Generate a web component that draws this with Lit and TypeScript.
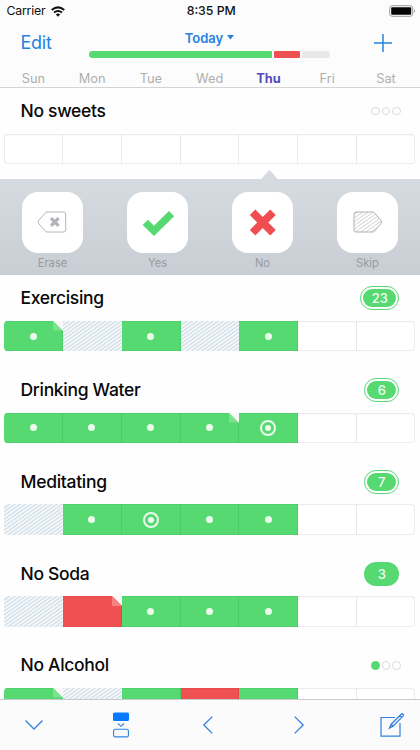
import { LitElement, html, css, svg, nothing } from "lit";
import { customElement, property } from "lit/decorators.js";
import { classMap } from "lit/directives/class-map.js";

// Marks: y done, n failed, s skipped, e empty; "*" adds a note fold, "o" adds a ring
type Habit = { name: string; marks: string[]; streak: number; ringed?: boolean };

const FIRST: Habit = { name: "No sweets", marks: ["e", "e", "e", "e", "e", "e", "e"], streak: 0 };
const HABITS: Habit[] = [
  { name: "Exercising", marks: ["y*", "s", "y", "s", "y", "e", "e"], streak: 23, ringed: true },
  { name: "Drinking Water", marks: ["y", "y", "y", "y*", "yo", "e", "e"], streak: 6, ringed: true },
  { name: "Meditating", marks: ["s", "y", "yo", "y", "y", "e", "e"], streak: 7, ringed: true },
  { name: "No Soda", marks: ["s", "n*", "y", "y", "y", "e", "e"], streak: 3 },
  { name: "No Alcohol", marks: ["y*", "s", "y", "n", "y", "e", "e"], streak: 1 },
];
const DAYS = ["Sun", "Mon", "Tue", "Wed", "Thu", "Fri", "Sat"];

@customElement("habit-row")
export class HabitRow extends LitElement {
  @property({ attribute: false }) habit!: Habit;

  static styles = css`
    :host { display: block; height: 91.7px; flex: none; }
    .head { display: flex; justify-content: space-between; align-items: center; height: 46px; padding: 1px 20.7px 0 20.5px; box-sizing: border-box; }
    .name { font-size: 17.5px; font-weight: 550; letter-spacing: -0.3px; color: #080808; line-height: 24px; white-space: nowrap; }
    .badge { box-sizing: border-box; min-width: 35px; height: 24px; border-radius: 12px; background: #55d970; color: #f2fff4; font-size: 13px; font-weight: 500; line-height: 24px; text-align: center; }
    .badge.ringed { border: 1px solid #55d970; background: none; padding: 2px; line-height: 18px; }
    .badge.ringed span { display: block; border-radius: 9px; background: #55d970; }
    .badge.wide { min-width: 39px; }
    .dots { display: flex; gap: 1.4px; margin-right: -1.2px; }
    .dot { box-sizing: border-box; flex: none; width: 8.8px; height: 8.8px; border: 1px solid #dadada; border-radius: 50%; }
    .dot.on { background: #55d970; border-color: #55d970; }
    .cells { box-sizing: border-box; margin: 0 4.6px 0 4.4px; height: 30.5px; display: grid; grid-template-columns: repeat(7, 1fr); border-radius: 4px; overflow: hidden; background: #fff; box-shadow: inset 0 0 0 1px #ececec, inset 0 1px 2px #efefef; }
    .cell { position: relative; display: grid; place-items: center; box-sizing: border-box; border-right: 1px solid #e8e8e8; }
    .cell:last-child { border-right: none; }
    .y { background: #55d970; border-right-color: #4ccb66; box-shadow: inset 0 1px #50d06b, inset 0 -1px #50d06b; }
    .n { background: #ef5051; border-right-color: #df4747; box-shadow: inset 0 1px #e84c4d, inset 0 -1px #e84c4d; }
    .s { border-right: none; }
    .hatch { width: 100%; height: 30.5px; display: block; }
    .mark { width: 7px; height: 7px; border-radius: 50%; background: #e9fbeb; }
    .ring { width: 12px; height: 12px; border: 2px solid #e9fbeb; border-radius: 50%; display: grid; place-items: center; }
    .ring .mark { width: 6px; height: 6px; }
    .fold { position: absolute; right: -1px; top: 0; width: 10px; height: 10px; }
  `;

  private cell(m: string, i: number) {
    const kind = m[0];
    const dot = html`<div class="mark"></div>`;
    return html`<div class="cell ${kind}">
      ${kind === "s"
        ? html`<svg class="hatch">
            <defs><pattern id="h${i}" width="3" height="3" patternUnits="userSpaceOnUse" patternTransform="rotate(-35)"><rect width="3" height="3" fill="#f5f7f9"/><rect width="3" height=".95" fill="#c6d9e6"/></pattern></defs>
            <rect width="100%" height="100%" fill="url(#h${i})"/>
          </svg>`
        : nothing}
      ${kind === "y" ? (m.includes("o") ? html`<div class="ring">${dot}</div>` : dot) : nothing}
      ${m.includes("*")
        ? html`<svg class="fold" viewBox="0 0 10 10"><path d="M0 0H10V10Z" fill="#f8f8f8"/><path d="M0 0L10 10H0Z" fill=${kind === "y" ? "#79e48a" : "#f78080"}/><path d="M0 10H10" stroke="#30a84a" stroke-opacity=${kind === "y" ? ".45" : "0"}/></svg>`
        : nothing}
    </div>`;
  }

  render() {
    const { name, marks, streak, ringed } = this.habit;
    return html`
      <div class="head">
        <div class="name">${name}</div>
        ${streak < 3
          ? html`<div class="dots">${[0, 1, 2].map((i) => html`<i class=${classMap({ dot: true, on: i < streak })}></i>`)}</div>`
          : html`<div class=${classMap({ badge: true, ringed: !!ringed, wide: streak > 9 })}><span>${streak}</span></div>`}
      </div>
      <div class="cells">${marks.map((m, i) => this.cell(m, i))}</div>
    `;
  }
}

const glyphs = {
  Erase: svg`<path d="M8.2 1H25.7Q27.7 1 27.7 3V19Q27.7 21 25.7 21H8.2L.6 12.5Q-.5 11 .6 9.5Z" fill="none" stroke="#b5b6ba"/><path d="M13 7.2L20.6 14.8M20.6 7.2L13 14.8" stroke="#b3b4b9" stroke-width="3.3"/>`,
  Yes: svg`<path d="M2.3 11.3L11 19.8L28.6 2.6" fill="none" stroke="#55d970" stroke-width="7.4"/>`,
  No: svg`<path d="M4.6 1.3L25 21.7M25 1.3L4.6 21.7" stroke="#ef4d50" stroke-width="7.8"/>`,
  Skip: svg`<defs><pattern id="k" width="3" height="3" patternUnits="userSpaceOnUse" patternTransform="rotate(-35)"><rect width="3" height=".8" fill="#cccdd0"/></pattern></defs><path d="M3 1H19.5Q20.8 1 21.8 2L28.2 9.8Q29.2 11 28.2 12.2L21.8 20Q20.8 21 19.5 21H3Q1 21 1 19V3Q1 1 3 1Z" fill="url(#k)" stroke="#b1b2b6"/>`,
};

@customElement("app-root")
export class AppRoot extends LitElement {
  static styles = css`
    :host { display: flex; flex-direction: column; width: 420px; height: 750px; overflow: hidden; background: #fefefe; font-family: Inter, "Liberation Sans", sans-serif; }
    svg { display: block; overflow: visible; fill: none; }
    header { flex: none; box-sizing: border-box; height: 87.5px; background: #fcfcfc; border-bottom: 1px solid #d4d4d4; }
    .status { height: 21px; display: grid; grid-template-columns: 1fr auto 1fr; align-items: center; padding: 1px 4px 0 6.5px; box-sizing: border-box; font-size: 12.3px; color: #111; line-height: 20px; }
    .carrier { display: flex; align-items: center; gap: 6px; letter-spacing: -0.2px; }
    .time { font-weight: 500; letter-spacing: 0; }
    .battery { justify-self: end; }
    .nav { height: 46px; display: grid; grid-template-columns: 89px 241px 1fr; }
    .edit { padding: 9px 0 0 20.5px; font-size: 18px; letter-spacing: -0.25px; line-height: 26px; color: #2682e1; }
    .today { height: 30px; padding-top: 3px; box-sizing: border-box; display: flex; gap: 4px; align-items: center; justify-content: center; font-size: 13px; font-weight: 600; color: #2682e1; }
    .bar { display: grid; grid-template-columns: 183px 26px 28px; gap: 2px; height: 7px; }
    .bar i { border-radius: 1px; }
    .done { background: #55d970; }
    .bar .done { border-radius: 4px 1px 1px 4px; }
    .missed { background: #ef5051; }
    .bar .left { background: #e8e8e8; border-radius: 1px 3px 3px 1px; }
    .plus { margin: 12.5px 0 0 44px; }
    .days { display: grid; grid-template-columns: repeat(7, 1fr); margin: 0 4.6px 0 4px; padding-top: 1px; text-align: center; font-size: 12.8px; line-height: 22px; color: #afafaf; }
    .now { color: #554cbc; font-weight: 700; }
    main { flex: 1; min-height: 0; overflow: hidden; }
    .panel { position: relative; box-sizing: border-box; height: 95.8px; padding-top: 12.5px; background: linear-gradient(#d6dbe2, #c9ced4); display: grid; grid-template-columns: repeat(4, 105px); justify-items: center; }
    .notch { position: absolute; left: 260.5px; top: -9px; width: 17px; height: 9.5px; }
    .key { text-align: center; font-size: 11.2px; line-height: 20px; color: #989ba1; }
    .tile { width: 61px; height: 61px; border-radius: 16px; background: #fff; display: grid; place-items: center; margin-bottom: .6px; }
    footer { flex: none; box-sizing: border-box; height: 51px; border-top: 1px solid #c8c9cb; background: #fbfbfc; display: grid; grid-template-columns: 68px 106px 68px 114px 64px; place-items: center; }
    .compose { margin-left: 7px; }
  `;

  render() {
    return html`
      <header>
        <div class="status">
          <div class="carrier">Carrier
            <svg width="14" height="11" viewBox="0 0 14 11"><path d="M.7 4Q7-1.3 13.3 4M3 6.6Q7 3.3 11 6.6" stroke="#111" stroke-width="2"/><path d="M4.8 8.4Q7 6.6 9.2 8.4L7 10.7Z" fill="#111"/></svg>
          </div>
          <div class="time">8:35 PM</div>
          <svg class="battery" width="27" height="12" viewBox="0 0 27 12"><rect x=".7" y=".7" width="23" height="10.6" rx="2.6" stroke="#999"/><rect x="2.2" y="2.2" width="20" height="7.6" rx="1" fill="#050505"/><path d="M25 4Q27 6 25 8Z" fill="#999"/></svg>
        </div>
        <div class="nav">
          <div class="edit">Edit</div>
          <div>
            <div class="today">Today <svg width="7" height="5" viewBox="0 0 7 5"><path d="M0 0H7L3.5 4.5Z" fill="#2682e1"/></svg></div>
            <div class="bar"><i class="done"></i><i class="missed"></i><i class="left"></i></div>
          </div>
          <svg class="plus" width="18" height="18" viewBox="0 0 18 18"><path d="M0 9H18M9 0V18" stroke="#2682e1" stroke-width="1.5"/></svg>
        </div>
        <div class="days">${DAYS.map((d) => html`<div class=${classMap({ now: d === "Thu" })}>${d}</div>`)}</div>
      </header>
      <main>
        <habit-row .habit=${FIRST}></habit-row>
        <div class="panel">
          <svg class="notch" viewBox="0 0 17 9.5"><path d="M0 9.5L7.5 .7Q8.5 0 9.5 .7L17 9.5Z" fill="#d5dae0"/></svg>
          ${Object.entries(glyphs).map(([label, g]) => html`<div class="key"><div class="tile"><svg width="30" height="22" viewBox="0 0 30 22">${g}</svg></div>${label}</div>`)}
        </div>
        ${HABITS.map((h) => html`<habit-row .habit=${h}></habit-row>`)}
      </main>
      <footer>
        <svg width="18" height="10" viewBox="0 0 18 10"><path d="M.5 .5L9 9L17.5 .5" stroke="#3181dc" stroke-width="1.3"/></svg>
        <svg width="16" height="26" viewBox="0 0 16 26"><rect y=".5" width="16" height="8.5" rx="1.5" fill="#087aff"/><path d="M5 11.5L8 14.3L11 11.5" stroke="#3181dc" stroke-width="1.1"/><rect x=".6" y="17.3" width="14.8" height="7.6" rx="1.5" stroke="#3181dc" stroke-width="1.1"/></svg>
        <svg width="10" height="18" viewBox="0 0 10 18"><path d="M9.3 .6L.8 9L9.3 17.4" stroke="#3181dc" stroke-width="1.3"/></svg>
        <svg width="10" height="18" viewBox="0 0 10 18"><path d="M.7 .6L9.2 9L.7 17.4" stroke="#3181dc" stroke-width="1.3"/></svg>
        <svg class="compose" width="24" height="24" viewBox="0 0 24 24"><path d="M15 4.5H1V23.2H20V10" stroke="#3181dc" stroke-width="1.2"/><path d="M9.5 15L11.2 11.2L21.4 1Q22.3 .4 23.1 1.2Q23.9 2.1 23.2 2.9L13 13.2ZM11.2 11.2L13 13.2M19.8 2.5L21.8 4.5" fill="#fbfbfc" stroke="#3181dc" stroke-width="1.3"/></svg>
      </footer>
    `;
  }
}
